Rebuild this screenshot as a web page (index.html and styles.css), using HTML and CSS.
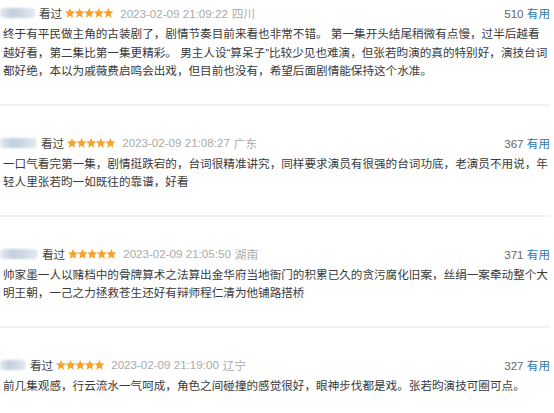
FILE: index.html
```html
<!DOCTYPE html>
<html lang="zh-CN">
<head>
  <meta charset="UTF-8">
  <meta name="viewport" content="width=device-width, initial-scale=1.0">
  <title>短评</title>
  <link rel="stylesheet" href="styles.css">
</head>
<body>

  <svg width="0" height="0" class="svg-defs">
    <defs>
      <polygon id="star" points="5,0 6.4,3.3 10,3.6 7.3,6 8.1,9.7 5,7.8 1.9,9.7 2.7,6 0,3.6 3.6,3.3"/>
      <g id="stars5">
        <use href="#star" x="0"/>
        <use href="#star" x="9.6"/>
        <use href="#star" x="19.2"/>
        <use href="#star" x="28.8"/>
        <use href="#star" x="38.4"/>
      </g>
    </defs>
  </svg>

  <div class="comment-list">

    <div class="comment-item comment-first">
      <div class="comment-info">
        <div class="comment-meta">
          <span class="user-blur" style="width:35px"></span>
          <span class="watched">看过</span>
          <svg class="rating" width="49" height="10" viewBox="0 0 49 10"><use href="#stars5"/></svg>
          <span class="comment-time">2023-02-09 21:09:22</span>
          <span class="comment-location">四川</span>
        </div>
        <div class="comment-vote"><span class="vote-count">510</span> <a href="#" class="vote-link">有用</a></div>
      </div>
      <p class="comment-text">终于有平民做主角的古装剧了，剧情节奏目前来看也非常不错。 第一集开头结尾稍微有点慢，过半后越看越好看，第二集比第一集更精彩。 男主人设“算呆子”比较少见也难演，但张若昀演的真的特别好，演技台词都好绝，本以为戚薇费启鸣会出戏，但目前也没有，希望后面剧情能保持这个水准。</p>
    </div>

    <div class="comment-item">
      <div class="comment-info">
        <div class="comment-meta">
          <span class="user-blur" style="width:37px"></span>
          <span class="watched">看过</span>
          <svg class="rating" width="49" height="10" viewBox="0 0 49 10"><use href="#stars5"/></svg>
          <span class="comment-time">2023-02-09 21:08:27</span>
          <span class="comment-location">广东</span>
        </div>
        <div class="comment-vote"><span class="vote-count">367</span> <a href="#" class="vote-link">有用</a></div>
      </div>
      <p class="comment-text">一口气看完第一集，剧情挺跌宕的，台词很精准讲究，同样要求演员有很强的台词功底，老演员不用说，年轻人里张若昀一如既往的靠谱，好看</p>
    </div>

    <div class="comment-item">
      <div class="comment-info">
        <div class="comment-meta">
          <span class="user-blur" style="width:38px"></span>
          <span class="watched">看过</span>
          <svg class="rating" width="49" height="10" viewBox="0 0 49 10"><use href="#stars5"/></svg>
          <span class="comment-time">2023-02-09 21:05:50</span>
          <span class="comment-location">湖南</span>
        </div>
        <div class="comment-vote"><span class="vote-count">371</span> <a href="#" class="vote-link">有用</a></div>
      </div>
      <p class="comment-text">帅家墨一人以赌档中的骨牌算术之法算出金华府当地衙门的积累已久的贪污腐化旧案，丝绢一案牵动整个大明王朝，一己之力拯救苍生还好有辩师程仁清为他铺路搭桥</p>
    </div>

    <div class="comment-item">
      <div class="comment-info">
        <div class="comment-meta">
          <span class="user-blur" style="width:26px"></span>
          <span class="watched">看过</span>
          <svg class="rating" width="49" height="10" viewBox="0 0 49 10"><use href="#stars5"/></svg>
          <span class="comment-time">2023-02-09 21:19:00</span>
          <span class="comment-location">辽宁</span>
        </div>
        <div class="comment-vote"><span class="vote-count">327</span> <a href="#" class="vote-link">有用</a></div>
      </div>
      <p class="comment-text">前几集观感，行云流水一气呵成，角色之间碰撞的感觉很好，眼神步伐都是戏。张若昀演技可圈可点。</p>
    </div>

  </div>

</body>
</html>
```

FILE: styles.css
```css
body {
  margin: 0;
  padding: 0;
  background-color: #fff;
  font-family: "Liberation Sans", "Noto Sans CJK SC", sans-serif;
  font-size: 11.6px;
  color: #3a3a3a;
  overflow: hidden;
}
.svg-defs {
  position: absolute;
  width: 0;
  height: 0;
}
.comment-list {
  padding-right: 4px;
}
.comment-item {
  padding: 27px 0 23px 0;
  border-bottom: 2px solid #f2f2f2;
}
.comment-first {
  padding-top: 3px;
}
.comment-info {
  display: flex;
  justify-content: space-between;
  align-items: center;
  height: 20px;
}
.comment-meta {
  display: flex;
  align-items: center;
}
.user-blur {
  display: inline-block;
  height: 10px;
  border-radius: 4px;
  background: linear-gradient(90deg, #e2e8ee 0%, #c2cfdc 35%, #cdd8e3 60%, #e4e9ef 100%);
  filter: blur(1.2px);
  margin-right: 4px;
}
.watched {
  color: #444;
  margin-right: 3px;
}
.rating {
  fill: #f7a22a;
  margin-right: 6px;
}
.comment-time {
  color: #aaa;
  margin-right: 4px;
}
.comment-location {
  color: #aaa;
}
.comment-vote {
  color: #666;
}
.vote-link {
  color: #3377aa;
  text-decoration: none;
}
.comment-text {
  margin: 2px 0 0 3px;
  line-height: 18.5px;
}
```
